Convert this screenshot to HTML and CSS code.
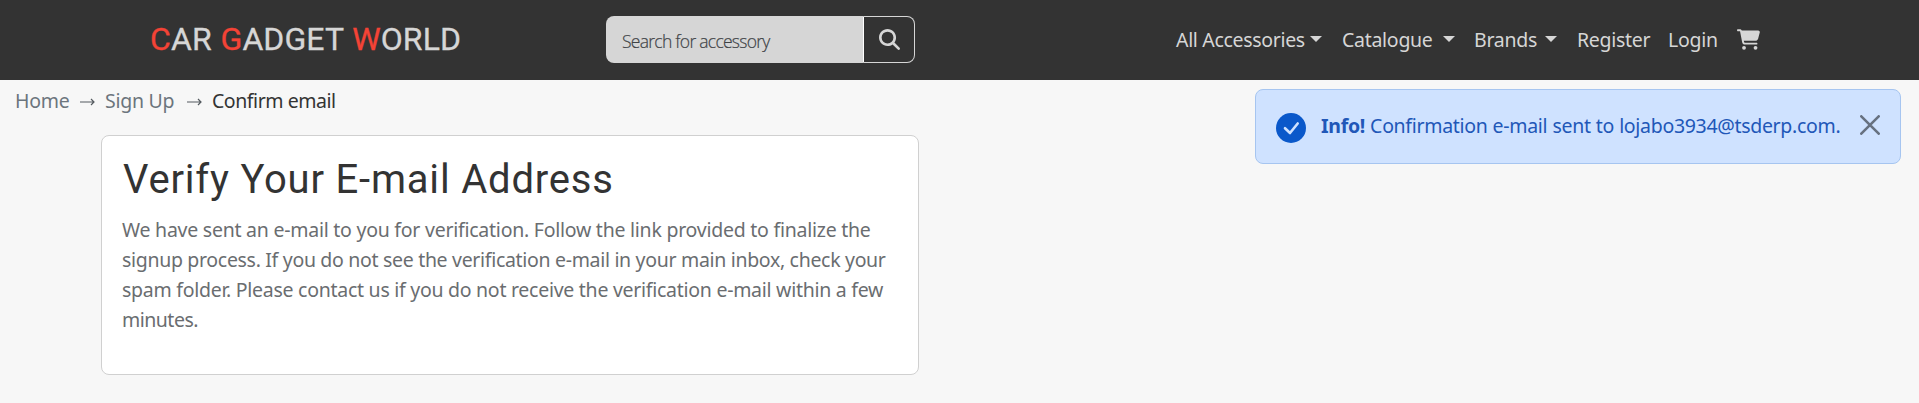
FILE: index.html
```html
<!DOCTYPE html>
<html lang="en">
<head>
<meta charset="utf-8">
<title>Confirm email</title>
<link rel="stylesheet" href="styles.css">
</head>
<body>
<header class="navbar">
  <a class="brand"><span>C</span>AR <span>G</span>ADGET <span>W</span>ORLD</a>
  <form class="search">
    <div class="search-input">Search for accessory</div>
    <div class="search-button">
      <svg width="21" height="21" viewBox="0 0 512 512" fill="currentColor"><path d="M416 208c0 45.900-14.900 88.300-40 122.700L502.600 457.400c12.500 12.500 12.500 32.800 0 45.300s-32.800 12.500-45.300 0L330.700 376c-34.400 25.200-76.800 40-122.700 40C93.100 416 0 322.900 0 208S93.100 0 208 0S416 93.100 416 208zM208 352a144 144 0 1 0 0-288 144 144 0 1 0 0 288z"/></svg>
    </div>
  </form>
  <nav class="menu">
    <a class="item-all"><span>All Accessories</span><i class="caret"></i></a>
    <a class="item-catalogue"><span>Catalogue</span><i class="caret"></i></a>
    <a class="item-brands"><span>Brands</span><i class="caret"></i></a>
    <a class="item-register">Register</a>
    <a class="item-login">Login</a>
    <a class="item-cart"><svg width="23" height="21" viewBox="0 0 576 512" fill="currentColor"><path d="M0 24C0 10.700 10.700 0 24 0H69.500c22 0 41.500 12.800 50.600 32h411c26.300 0 45.500 25 38.600 50.400l-41 152.300c-8.500 31.400-37 53.300-69.500 53.300H170.700l5.400 28.500c2.200 11.300 12.100 19.500 23.600 19.500H488c13.300 0 24 10.700 24 24s-10.700 24-24 24H199.700c-34.600 0-64.300-24.600-70.700-58.500L77.400 54.500c-.7-3.800-4-6.500-7.900-6.500H24C10.700 48 0 37.300 0 24zM128 464a48 48 0 1 1 96 0 48 48 0 1 1-96 0zm336-48a48 48 0 1 1 0 96 48 48 0 1 1 0-96z"/></svg></a>
  </nav>
</header>
<div class="page">
  <main class="content">
    <div class="breadcrumb">
      <a class="crumb-home">Home</a>
      <svg class="arrow" width="15" height="8" viewBox="0 0 15 8" fill="none" stroke="currentColor" stroke-width="1.200"><path d="M0 4H14M11 1L14 4L11 7"/></svg>
      <a class="crumb-signup">Sign Up</a>
      <svg class="arrow" width="15" height="8" viewBox="0 0 15 8" fill="none" stroke="currentColor" stroke-width="1.200"><path d="M0 4H14M11 1L14 4L11 7"/></svg>
      <span class="crumb-current">Confirm email</span>
    </div>
    <section class="card">
      <h1>Verify Your E-mail Address</h1>
      <p><span class="loose">We have sent an e-mail to you for verification. Follow the link provided to finalize the</span><br><span class="tight">signup process. If you do not see the verification e-mail in your main inbox, check your</span><br>spam folder. Please contact us if you do not receive the verification e-mail within a few<br><span class="last">minutes.</span></p>
    </section>
  </main>
  <aside class="alert">
    <svg class="alert-icon" width="30" height="30" viewBox="0 0 30 30"><circle cx="15" cy="15" r="15" fill="#0a58ca"/><path d="M9 15.200L14 20L21.700 10.500" fill="none" stroke="#cfe2ff" stroke-width="2.600" stroke-linecap="round" stroke-linejoin="round"/></svg>
    <div class="alert-text"><strong>Info!</strong> Confirmation e-mail sent to lojabo3934@tsderp.com.</div>
    <svg class="close" width="20" height="20" viewBox="0 0 20 20"><path d="M1.300 1.300L18.700 18.700M18.700 1.300L1.300 18.700" stroke="#677180" stroke-width="2.600" stroke-linecap="round"/></svg>
  </aside>
</div>
</body>
</html>
```
FILE: styles.css
```css
* { box-sizing: border-box; }
body {
  margin: 0;
  min-height: 403px;
  background: #f7f7f7;
  color: #333;
  font-family: "Noto Sans", "Open Sans", sans-serif;
  font-size: 19.500px;
  letter-spacing: -0.280px;
  line-height: 30px;
  white-space: nowrap;
}
.navbar {
  display: flex;
  align-items: flex-start;
  height: 80px;
  background: #333;
  color: #d6d6d6;
}
.brand {
  width: 456px;
  margin-left: 150px;
  padding-top: 19px;
  font-family: Roboto, sans-serif;
  font-size: 32px;
  letter-spacing: 0.080px;
  word-spacing: 0.800px;
  line-height: 40px;
  -webkit-text-stroke: 0.300px;
}
.brand span { color: #f44336; }
.search { display: flex; width: 309px; height: 47px; margin-top: 16px; }
.search-input {
  width: 257px;
  padding: 10px 16px;
  border-radius: 8px 0 0 8px;
  background: #d6d6d6;
  color: #404346;
  font-family: "Open Sans", sans-serif;
  font-weight: 300;
  font-size: 17.500px;
  letter-spacing: -0.730px;
  -webkit-text-stroke: 0.200px;
}
.search-button {
  display: flex;
  align-items: center;
  justify-content: center;
  width: 52px;
  border: 1px solid #d6d6d6;
  border-left-color: #fff;
  border-radius: 0 8px 8px 0;
}
.menu { display: flex; margin-left: 261px; padding-top: 25px; }
.menu a { display: flex; justify-content: space-between; height: 30px; }
.caret {
  margin-top: 11px;
  width: 12px;
  height: 6px;
  background: currentColor;
  clip-path: polygon(0 0, 100% 0, 50% 100%);
}
.item-all { width: 146px; margin-right: 20px; letter-spacing: -0.320px; }
.item-catalogue { width: 113px; margin-right: 19px; }
.item-brands { width: 83px; margin-right: 20px; }
.menu .item-register { width: 91px; }
.menu .item-login { width: 69px; }
.item-cart svg { margin-top: 4px; }
.page { display: flex; justify-content: space-between; align-items: flex-start; }
.breadcrumb { display: flex; align-items: center; padding: 6px 0 0 15px; color: #6c757d; }
.crumb-home { width: 65px; }
.crumb-signup { width: 82px; margin-left: 10px; }
.crumb-current { margin-left: 10px; color: #333; letter-spacing: -0.450px; }
.arrow { margin-top: 2px; color: #555b60; }
.card {
  width: 818px;
  height: 240px;
  margin: 19px 0 0 101px;
  padding: 20px;
  border: 1px solid #d0d0d0;
  border-radius: 8px;
  background: #fff;
}
.card h1 {
  margin: 0 0 11px 1px;
  font: 400 40px/48px Roboto, sans-serif;
  letter-spacing: 0.800px;
}
.card p { margin: 0; color: #6a6d70; letter-spacing: -0.270px; }
.loose { letter-spacing: -0.245px; }
.tight { letter-spacing: -0.313px; }
.last { letter-spacing: -0.500px; }
.alert {
  display: flex;
  width: 646px;
  height: 75px;
  margin: 9px 18px 0 0;
  padding: 0 20px;
  border: 1px solid #a6c5f0;
  border-radius: 8px;
  background: #cfe2ff;
  color: #2157b8;
}
.alert-icon { margin: 23px 15px 0 0; }
.alert-text { width: 539px; padding-top: 21px; letter-spacing: -0.310px; word-spacing: 0.400px; }
.close { margin-top: 25px; }
```
